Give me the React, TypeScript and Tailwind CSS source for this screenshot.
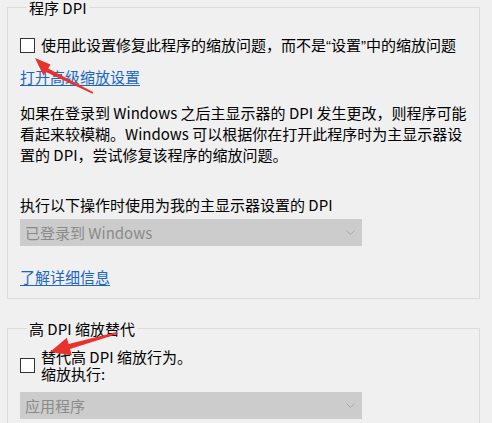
import type { ReactNode } from 'react'

function Checkbox() {
  return <div className="w-[15px] h-[15px] shrink-0 border border-[#333333] bg-white" />
}

function Dropdown({ label }: { label: string }) {
  return (
    <div className="flex items-center justify-between w-[342px] h-[27px] bg-[#cccccc] pl-[5px] pr-[7px] text-[#8a8a8a]">
      <span className="leading-[27px]">{label}</span>
      <svg width="9" height="5" viewBox="0 0 9 5" fill="none">
        <path d="M0.5 0.5 L4.5 4.5 L8.5 0.5" stroke="#a8a8a8" strokeWidth="1" />
      </svg>
    </div>
  )
}

function Link({ children }: { children: ReactNode }) {
  return <span className="text-[#1a66c4] underline underline-offset-2 leading-[16px]">{children}</span>
}

function Group({ title, className, children }: { title: string; className?: string; children: ReactNode }) {
  return (
    <fieldset className={`border border-[#dcdcdc] pl-[12px] ${className ?? ''}`}>
      <legend className="ml-[7px] px-[2px] leading-[15px]">{title}</legend>
      {children}
    </fieldset>
  )
}

export default function App() {
  return (
    <div className="relative w-[492px] h-[423px] overflow-hidden bg-[#f0f0f0] text-[15px] text-black font-['Noto_Sans_CJK_SC',sans-serif]">
      <div className="pl-[7px] pr-[12px]">
        <Group title="程序 DPI" className="h-[299px]">
          <div className="mt-[22px] flex items-center gap-[6px] h-[16px]">
            <Checkbox />
            <span className="whitespace-nowrap leading-[16px]">
              使用此设置修复此程序的缩放问题，而不是
              <span className="font-['Liberation_Sans',sans-serif]">“</span>设置
              <span className="font-['Liberation_Sans',sans-serif]">”</span>中的缩放问题
            </span>
          </div>
          <div className="mt-[13px] h-[16px]">
            <Link>打开高级缩放设置</Link>
          </div>
          <p className="mt-[20px] leading-[21px] whitespace-nowrap">
            如果在登录到 Windows 之后主显示器的 DPI 发生更改，则程序可能
            <br />
            看起来较模糊。Windows 可以根据你在打开此程序时为主显示器设
            <br />
            置的 DPI，尝试修复该程序的缩放问题。
          </p>
          <p className="mt-[29px] leading-[21px] whitespace-nowrap">执行以下操作时使用为我的主显示器设置的 DPI</p>
          <div className="mt-[4px]">
            <Dropdown label="已登录到 Windows" />
          </div>
          <div className="mt-[20px] h-[16px]">
            <Link>了解详细信息</Link>
          </div>
        </Group>

        <Group title="高 DPI 缩放替代" className="mt-[22px] h-[140px]">
          <div className="mt-[12px] flex items-center gap-[6px]">
            <Checkbox />
            <div className="leading-[17px] whitespace-nowrap">
              <div>替代高 DPI 缩放行为。</div>
              <div>缩放执行:</div>
            </div>
          </div>
          <div className="mt-[10px]">
            <Dropdown label="应用程序" />
          </div>
        </Group>
      </div>

      <svg className="absolute inset-0 pointer-events-none" width="492" height="423" viewBox="0 0 492 423">
        <polygon
          fill="#e8322d"
          points="35,58 50.5,64.6 48.2,68.4 93.4,92.3 92.6,93.7 45.8,72 43.5,75.8"
        />
        <polygon
          fill="#e8322d"
          points="50,352 66.8,337.8 68.6,344.1 116.7,332 117.3,334 70,348.9 71.8,355.2"
        />
      </svg>
    </div>
  )
}
